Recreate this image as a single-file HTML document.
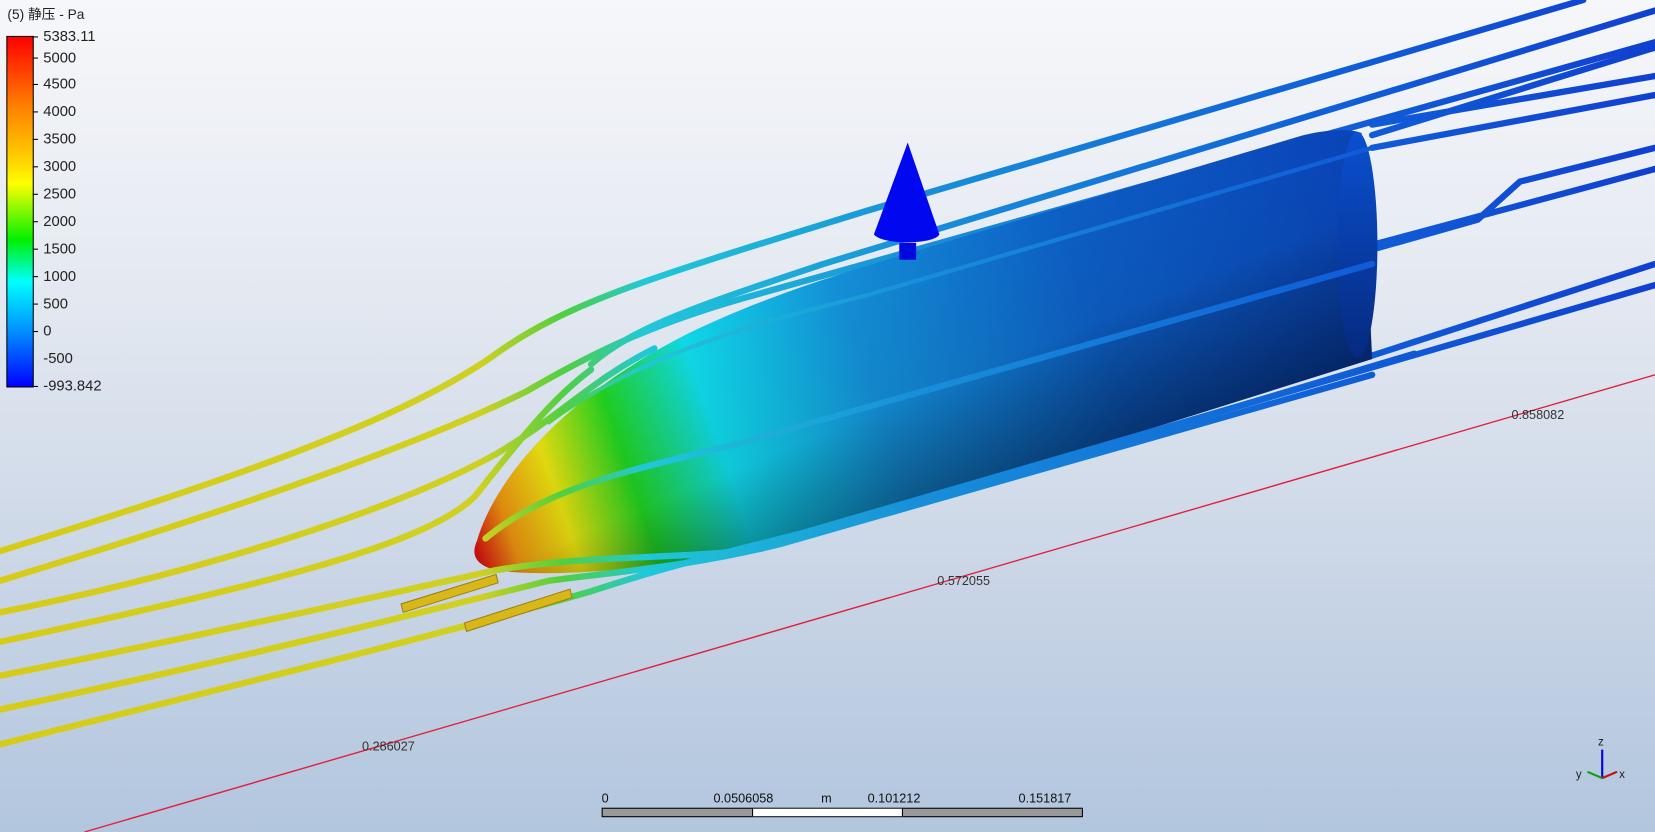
<!DOCTYPE html>
<html><head><meta charset="utf-8"><style>
html,body{margin:0;padding:0;width:1655px;height:832px;overflow:hidden}
body{background:linear-gradient(#f6f7fa 0%,#e4e9f1 35%,#c9d5e6 70%,#b2c6de 100%);font-family:"Liberation Sans","Noto Sans CJK SC",sans-serif}
svg{position:absolute;left:0;top:0}
</style></head><body>
<svg width="1655" height="832" viewBox="0 0 1568 788" preserveAspectRatio="none">
<defs>
<linearGradient id="leg" x1="0" y1="0" x2="0" y2="1">
<stop offset="0" stop-color="#ff0000"/><stop offset="0.2" stop-color="#ff8000"/><stop offset="0.35" stop-color="#ffd000"/><stop offset="0.42" stop-color="#ffff00"/><stop offset="0.58" stop-color="#00f000"/><stop offset="0.7" stop-color="#00ffff"/><stop offset="0.84" stop-color="#0090ff"/><stop offset="1" stop-color="#0000ff"/>
</linearGradient>
<linearGradient id="sl" gradientUnits="userSpaceOnUse" x1="0" y1="0" x2="1568" y2="0">
<stop offset="0" stop-color="#d6cc18"/><stop offset="0.29" stop-color="#d0d020"/><stop offset="0.34" stop-color="#50d040"/><stop offset="0.39" stop-color="#20c8d8"/><stop offset="0.55" stop-color="#1890d8"/><stop offset="0.8" stop-color="#1060d8"/><stop offset="1" stop-color="#1040d0"/>
</linearGradient>
<linearGradient id="body" gradientUnits="userSpaceOnUse" x1="450" y1="520" x2="1300" y2="230">
<stop offset="0" stop-color="#d01010"/><stop offset="0.04" stop-color="#e89010"/><stop offset="0.1" stop-color="#e8e010"/><stop offset="0.18" stop-color="#20d020"/><stop offset="0.28" stop-color="#10d8e8"/><stop offset="0.45" stop-color="#1490d8"/><stop offset="0.7" stop-color="#0d60c8"/><stop offset="1" stop-color="#0a48c0"/>
</linearGradient>
<linearGradient id="shade" gradientUnits="userSpaceOnUse" x1="800" y1="250" x2="920" y2="540">
<stop offset="0" stop-color="#000" stop-opacity="0"/><stop offset="0.45" stop-color="#000" stop-opacity="0.08"/><stop offset="1" stop-color="#000828" stop-opacity="0.7"/>
</linearGradient>
<linearGradient id="tail" x1="0" y1="0" x2="0" y2="1">
<stop offset="0" stop-color="#0a50d0"/><stop offset="1" stop-color="#062a80"/>
</linearGradient>
</defs>
<line x1="80" y1="788" x2="1568" y2="355" stroke="#e0203c" stroke-width="1.3"/>
<g font-size="12" fill="#333"><text x="343" y="711">0.286027</text><text x="888" y="554">0.572055</text><text x="1432" y="397">0.858082</text></g>
<g fill="none" stroke="url(#sl)" stroke-width="6" stroke-linecap="round">
<path d="M0,522 C200,460 380,400 470,335 C540,285 620,262 820,200 L1500,0"/>
<path d="M0,550 C230,480 400,420 500,370 C560,335 620,305 720,278 L1568,40"/>
<path d="M560,345 C600,310 660,290 780,250 L1568,10"/>
<path d="M1300,128 L1568,45"/><path d="M1300,118 L1568,72"/><path d="M1300,140 L1568,90"/>
<path d="M1305,235 L1400,208 L1440,172 L1568,140"/><path d="M1300,232 L1568,160"/>
<path d="M1290,340 L1568,250"/>
</g>
<path d="M452,512 C470,450 540,370 660,312 C740,275 800,258 900,228 L1235,128 C1260,122 1280,122 1290,126 L1300,340 L760,510 C640,540 520,548 470,540 C450,535 446,525 452,512 Z" fill="url(#body)"/>
<path d="M452,512 C470,450 540,370 660,312 C740,275 800,258 900,228 L1235,128 C1260,122 1280,122 1290,126 L1300,340 L760,510 C640,540 520,548 470,540 C450,535 446,525 452,512 Z" fill="url(#shade)"/>
<ellipse cx="1286" cy="232" rx="19" ry="107" fill="url(#tail)"/>
<path d="M860,135 L890,222 C885,232 835,232 828,222 Z" fill="#0008f0"/>
<rect x="852" y="230" width="16" height="16" fill="#0008e0"/>
<g fill="none" stroke="url(#sl)" stroke-width="6" stroke-linecap="round">
<path d="M0,580 C200,540 380,480 470,430 C530,395 560,360 620,330"/>
<path d="M0,608 C220,560 400,520 450,470 C490,420 520,380 560,350"/>
<path d="M460,510 C520,460 600,445 700,420 L1300,250"/>
<path d="M520,400 C600,340 700,310 820,280 L1300,140" stroke-width="4"/>
<path d="M0,640 C200,600 380,560 470,540 C560,525 640,530 720,520 L1340,335"/>
<path d="M0,672 C200,630 400,580 520,550 C600,540 660,535 740,515 L1300,355"/>
<path d="M0,705 C220,650 420,600 560,560 C620,540 680,525 760,505 L1568,270"/>
</g>
<g fill="#d8b818" stroke="#a08010" stroke-width="1">
<path d="M380,572 L470,544 L472,552 L382,580 Z"/><path d="M440,590 L540,558 L542,566 L442,598 Z"/>
</g>
<text x="7" y="18" font-size="13" fill="#222">(5) 静压 - Pa</text>
<rect x="6.5" y="34.5" width="25" height="332" fill="url(#leg)" stroke="#000"/>
<g stroke="#000"><line x1="31" y1="35" x2="36" y2="35"/><line x1="31" y1="55" x2="36" y2="55"/><line x1="31" y1="80" x2="36" y2="80"/><line x1="31" y1="106" x2="36" y2="106"/><line x1="31" y1="132" x2="36" y2="132"/><line x1="31" y1="158" x2="36" y2="158"/><line x1="31" y1="184" x2="36" y2="184"/><line x1="31" y1="210" x2="36" y2="210"/><line x1="31" y1="236" x2="36" y2="236"/><line x1="31" y1="262" x2="36" y2="262"/><line x1="31" y1="288" x2="36" y2="288"/><line x1="31" y1="314" x2="36" y2="314"/><line x1="31" y1="366" x2="36" y2="366"/></g>
<g font-size="14" fill="#222">
<text x="41" y="39">5383.11</text><text x="41" y="59">5000</text><text x="41" y="84">4500</text><text x="41" y="110">4000</text><text x="41" y="136">3500</text><text x="41" y="162">3000</text><text x="41" y="188">2500</text><text x="41" y="214">2000</text><text x="41" y="240">1500</text><text x="41" y="266">1000</text><text x="41" y="292">500</text><text x="41" y="318">0</text><text x="41" y="344">-500</text><text x="41" y="370">-993.842</text>
</g>
<g font-size="12" fill="#111"><text x="570" y="760">0</text><text x="676" y="760">0.0506058</text><text x="778" y="760">m</text><text x="822" y="760">0.101212</text><text x="965" y="760">0.151817</text></g>
<rect x="570.5" y="765.5" width="455" height="8" fill="#999" stroke="#000"/>
<rect x="713" y="766" width="142" height="7" fill="#fff"/>
<line x1="713" y1="766" x2="713" y2="773" stroke="#000"/><line x1="855" y1="766" x2="855" y2="773" stroke="#000"/>
<line x1="1518" y1="737" x2="1518" y2="710" stroke="#0000e0" stroke-width="2"/>
<line x1="1518" y1="737" x2="1504" y2="731" stroke="#10a010" stroke-width="2"/>
<line x1="1518" y1="737" x2="1532" y2="731" stroke="#c01010" stroke-width="2"/>
<g font-size="11" fill="#222"><text x="1514" y="706">z</text><text x="1493" y="737">y</text><text x="1534" y="737">x</text></g>
</svg>
</body></html>
